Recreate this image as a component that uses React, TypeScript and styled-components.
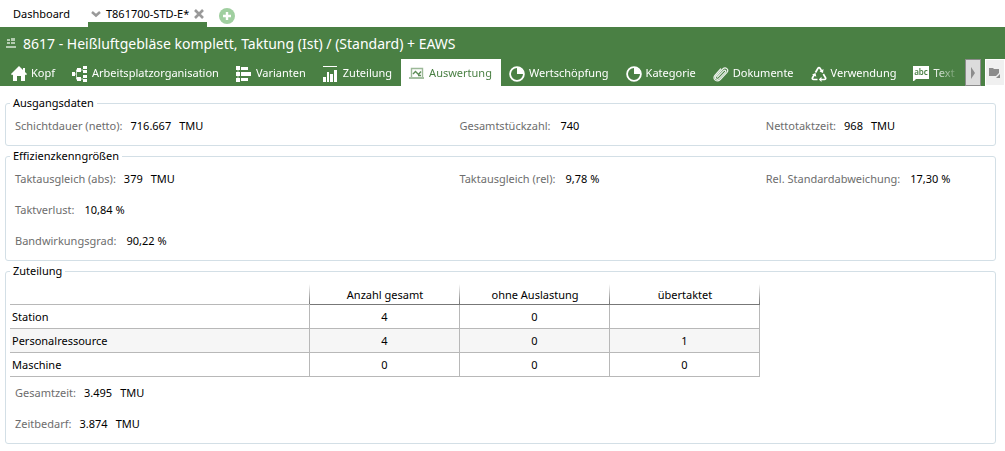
import React from "react";
import styled, { createGlobalStyle } from "styled-components";

const GREEN = "#4a8044";
const LINE = "#b8b8b8";

const GlobalStyle = createGlobalStyle`
  *, *::before, *::after { box-sizing: border-box; }
  body {
    margin: 0;
    background: #fff;
    color: #000;
    font: 11px/16px "Noto Sans", "Open Sans", sans-serif;
  }
  button { font: inherit; }
`;

const DocumentBar = styled.nav`
  display: flex;
  height: 27px;
  padding-left: 5px;
`;

const DocumentTab = styled.div<{ $active?: boolean }>`
  display: flex;
  align-items: center;
  gap: 5px;
  padding: ${(p) => (p.$active ? "5px 3px 0" : "5px 8px 4px")};
  margin-left: ${(p) => (p.$active ? "10px" : "0")};
  border-bottom: ${(p) => (p.$active ? `5px solid ${GREEN}` : "none")};
`;

const PlainButton = styled.button`
  display: flex;
  align-items: center;
  padding: 0;
  border: 0;
  background: none;
  color: inherit;
  white-space: nowrap;
  cursor: pointer;
`;

const AddButton = styled(PlainButton)`
  margin-left: 12px;
  padding-top: 5px;
`;

const Header = styled.header`
  background: ${GREEN};
  color: #fff;
`;

const TitleRow = styled.div`
  display: flex;
  align-items: center;
  gap: 7px;
  height: 32px;
  padding: 2px 6px 0;
`;

const Title = styled.h1`
  margin: 0;
  font-size: 14px;
  line-height: 20px;
  font-weight: 400;
  white-space: nowrap;
`;

const TabRow = styled.div`
  display: flex;
  height: 27px;
`;

const TabStrip = styled.div`
  display: flex;
  flex: 1;
  min-width: 0;
  padding-left: 3px;
  overflow: hidden;
  mask-image: linear-gradient(to left, transparent 4px, #000 32px);
`;

const Tab = styled.button<{ $active?: boolean }>`
  display: flex;
  flex: none;
  align-items: center;
  gap: 4px;
  padding: 1px 9px 0 8px;
  border: 0;
  background: ${(p) => (p.$active ? "#fff" : "transparent")};
  color: ${(p) => (p.$active ? GREEN : "#fff")};
  white-space: nowrap;
  cursor: pointer;
`;

const ScrollButton = styled.button`
  display: flex;
  flex: none;
  align-items: center;
  justify-content: center;
  width: 16px;
  margin-right: 4px;
  padding: 0;
  border: 1px solid #8c8c8c;
  background: #dcdcdc;
`;

const FolderButton = styled(ScrollButton)`
  width: 20px;
  margin: 0;
  border-color: #fff;
  background: #f0f0f0;
`;

const Content = styled.main`
  display: flex;
  flex-direction: column;
  gap: 2px;
  padding: 9px 9px 7px 5px;
`;

const Group = styled.fieldset`
  min-width: 0;
  margin: 0;
  padding: 0 4px 4px;
  border: 1px solid #d3dfe6;
  border-radius: 3px;
`;

const GroupTitle = styled.legend`
  padding: 0 3px;
`;

const Figures = styled.dl`
  display: grid;
  grid-template-columns: 444fr 306fr 225fr;
  grid-auto-rows: 30px;
  row-gap: 1px;
  margin: 0;
  padding-left: 5px;
`;

const FigureItem = styled.div<{ $newLine?: boolean }>`
  display: flex;
  align-items: center;
  grid-column-start: ${(p) => (p.$newLine ? 1 : "auto")};
  white-space: nowrap;
`;

const FigureName = styled.dt`
  color: #6d6d6d;
`;

const FigureValue = styled.dd<{ $percent?: boolean }>`
  margin: 0 0 0 ${(p) => (p.$percent ? 10 : 8)}px;
`;

const Table = styled.table`
  width: 750px;
  max-width: 100%;
  margin: 5px 0 1px;
  border-collapse: separate;
  border-spacing: 0;
  table-layout: fixed;
`;

const CornerCell = styled.td`
  width: 40%;
  padding: 0;
  border-bottom: 1px solid ${LINE};
  background: linear-gradient(#fff, #777) right / 1px 100% no-repeat;
`;

const ColumnHead = styled.th`
  height: 21px;
  padding: 2px 0 0;
  border-bottom: 1px solid #777;
  background: linear-gradient(#fff, #777) right / 1px 100% no-repeat;
  font-weight: 400;
`;

const BodyRow = styled.tr`
  &:nth-child(even) { background: #f6f6f6; }
`;

const RowHead = styled.th`
  height: 24px;
  padding: 0 2px;
  border: solid ${LINE};
  border-width: 0 1px 1px 0;
  font-weight: 400;
  text-align: left;
`;

const Cell = styled.td`
  padding: 0;
  border: solid ${LINE};
  border-width: 0 1px 1px 0;
  text-align: center;
`;

const Svg = styled.svg`
  display: block;
  flex: none;
`;

const TabSvg = styled(Svg)`
  margin-top: 2px;
`;

type IconName =
  | "home" | "org" | "variants" | "bars" | "chart"
  | "pie" | "clip" | "recycle" | "abc";

const drawings: Record<IconName, React.ReactNode> = {
  home: (
    <path fill="currentColor" d="M8 0 0 8l1 1.200L2 8.500V15h4v-5h4v5h4V8.500l1 .700L16 8l-2-2V2h-2v2z" />
  ),
  org: (
    <g fill="currentColor">
      <path d="M0 6h3v4H0zM5 2h4v4H5zM5 11h4v4H5zM11 0h4v3h-4zM11 4h4v3h-4zM11 9h4v3h-4zM11 13h4v3h-4z" />
      <path d="M3 8h1M4.500 4v9M4 4h1M4 13h1M9 4h2M9 13h2" fill="none" stroke="currentColor" opacity=".7" />
    </g>
  ),
  variants: (
    <g fill="currentColor">
      <path d="M0 0h4v4H0zM0 6h4v4H0zM0 12h4v4H0zM5 1h7v3H5zM5 6h10v4H5zM5 12h7v3H5z" />
      <path d="M2 0v16" stroke="currentColor" opacity=".6" />
    </g>
  ),
  bars: (
    <path fill="currentColor" d="M0 0h14v1H0zM0 11h3v5H0zM4 6h2v10H4zM7 8h3v8H7zM11 4h3v12h-3z" />
  ),
  chart: (
    <g fill="none" stroke="currentColor">
      <path d="M2.500 11V2.500h11V11" strokeWidth="1.400" opacity=".55" />
      <path d="M0 12h15" strokeWidth="2" opacity=".5" />
      <path d="m4 8 2.500-2.500 3 3L12 5.500M9 9.500h3" strokeWidth="1.400" opacity=".9" />
    </g>
  ),
  pie: (
    <g>
      <circle cx="8" cy="8" r="6.900" fill="none" stroke="currentColor" strokeWidth="1.800" />
      <path fill="currentColor" d="M8 8V1.500A6.500 6.500 0 0 1 14.500 8z" />
    </g>
  ),
  clip: (
    <path
      fill="none" stroke="currentColor" strokeWidth="1.200" strokeLinecap="round" opacity=".9"
      d="m4.500 11 6.200-6.300c1.200-1.200 2.700.2 1.600 1.500L6 12.600c-2 2-4.800-.3-2.800-2.600l6.600-7c2.800-2.800 6.600.7 4 3.600L7.300 13.500c-3.400 3.400-8.400-.3-5.400-4.200L7.600 3"
    />
  ),
  recycle: (
    <g fill="none" stroke="currentColor" strokeWidth="1.700">
      <path d="M4.500 6.500 7 2.200c.5-.8 1.500-.8 2 0l1.800 3" />
      <path d="m12.300 8 2.200 3.700c.5.900 0 1.800-1 1.800H9.500" />
      <path d="M6.500 13.500h-4c-1 0-1.500-.9-1-1.800l1.800-3" />
      <path fill="currentColor" stroke="none" d="m12.500 3-.5 4-3.500-1.500zM10.500 10.800v5.200L7.800 13.500zM1 8.500 4.500 7l.8 3.700z" />
    </g>
  ),
  abc: (
    <g>
      <path fill="currentColor" d="M0 0h16v13H3l-2 2H0z" />
      <text x="8" y="9" textAnchor="middle" fontSize="8" fontWeight="600" fill={GREEN}>abc</text>
    </g>
  ),
};

const Icon = ({ name }: { name: IconName }) => (
  <TabSvg width="16" height="16" viewBox="0 0 16 16" aria-hidden="true">{drawings[name]}</TabSvg>
);

const tabs: { label: string; icon: IconName }[] = [
  { label: "Kopf", icon: "home" },
  { label: "Arbeitsplatzorganisation", icon: "org" },
  { label: "Varianten", icon: "variants" },
  { label: "Zuteilung", icon: "bars" },
  { label: "Auswertung", icon: "chart" },
  { label: "Wertschöpfung", icon: "pie" },
  { label: "Kategorie", icon: "pie" },
  { label: "Dokumente", icon: "clip" },
  { label: "Verwendung", icon: "recycle" },
  { label: "Text", icon: "abc" },
];

const rows = [
  { name: "Station", values: ["4", "0", ""] },
  { name: "Personalressource", values: ["4", "0", "1"] },
  { name: "Maschine", values: ["0", "0", "0"] },
];

interface FigureProps {
  name: string;
  value: string;
  unit?: string;
  newLine?: boolean;
}

const Figure = ({ name, value, unit, newLine }: FigureProps) => (
  <FigureItem $newLine={newLine}>
    <FigureName>{name}:</FigureName>
    <FigureValue $percent={!unit}>{value}</FigureValue>
    {unit && <FigureValue>{unit}</FigureValue>}
  </FigureItem>
);

export default function App() {
  return (
    <>
      <GlobalStyle />
      <DocumentBar>
        <DocumentTab>
          <PlainButton>Dashboard</PlainButton>
        </DocumentTab>
        <DocumentTab $active>
          <PlainButton aria-label="Liste">
            <Svg width="10" height="8" viewBox="0 0 10 8">
              <path d="m1 2 4 3.500L9 2" fill="none" stroke="#999" strokeWidth="2.500" />
            </Svg>
          </PlainButton>
          <PlainButton>T861700-STD-E*</PlainButton>
          <PlainButton aria-label="Schließen">
            <Svg width="10" height="10" viewBox="0 0 10 10">
              <path d="m1 1 8 8M9 1 1 9" stroke="#999" strokeWidth="2.600" />
            </Svg>
          </PlainButton>
        </DocumentTab>
        <AddButton aria-label="Neu">
          <Svg width="16" height="16" viewBox="0 0 16 16">
            <circle cx="8" cy="8" r="8" fill="#a0cfa0" />
            <path d="M8 4v8M4 8h8" stroke="#fff" strokeWidth="2.400" />
          </Svg>
        </AddButton>
      </DocumentBar>
      <Header>
        <TitleRow>
          <Svg width="10" height="12" viewBox="0 0 10 12" aria-hidden="true">
            <path fill="#b4cdb1" d="M1 1h3v2H1zM5 0h4v3H5zM1 4h3v2H1zM5 4h4v2H5zM0 8h10v2H0z" />
          </Svg>
          <Title>8617 - Heißluftgebläse komplett, Taktung (Ist) / (Standard) + EAWS</Title>
        </TitleRow>
        <TabRow>
          <TabStrip role="tablist">
            {tabs.map((t) => (
              <Tab key={t.label} role="tab" $active={t.icon === "chart"} aria-selected={t.icon === "chart"}>
                <Icon name={t.icon} />
                {t.label}
              </Tab>
            ))}
          </TabStrip>
          <ScrollButton aria-label="Weitere Register">
            <Svg width="6" height="14" viewBox="0 0 6 14">
              <path fill="#8c8c8c" d="M1 1v12l4-6z" />
            </Svg>
          </ScrollButton>
          <FolderButton aria-label="Ordner">
            <Svg width="12" height="12" viewBox="0 0 12 12">
              <path fill="#8c8c8c" d="M0 1h4l1 1h5v4L7 9H0zM11 7v4H7z" />
            </Svg>
          </FolderButton>
        </TabRow>
      </Header>
      <Content>
        <Group>
          <GroupTitle>Ausgangsdaten</GroupTitle>
          <Figures>
            <Figure name="Schichtdauer (netto)" value="716.667" unit="TMU" />
            <Figure name="Gesamtstückzahl" value="740" />
            <Figure name="Nettotaktzeit" value="968" unit="TMU" />
          </Figures>
        </Group>
        <Group>
          <GroupTitle>Effizienzkenngrößen</GroupTitle>
          <Figures>
            <Figure name="Taktausgleich (abs)" value="379" unit="TMU" />
            <Figure name="Taktausgleich (rel)" value="9,78 %" />
            <Figure name="Rel. Standardabweichung" value="17,30 %" />
            <Figure name="Taktverlust" value="10,84 %" newLine />
            <Figure name="Bandwirkungsgrad" value="90,22 %" newLine />
          </Figures>
        </Group>
        <Group>
          <GroupTitle>Zuteilung</GroupTitle>
          <Table>
            <thead>
              <tr>
                <CornerCell />
                <ColumnHead scope="col">Anzahl gesamt</ColumnHead>
                <ColumnHead scope="col">ohne Auslastung</ColumnHead>
                <ColumnHead scope="col">übertaktet</ColumnHead>
              </tr>
            </thead>
            <tbody>
              {rows.map((r) => (
                <BodyRow key={r.name}>
                  <RowHead scope="row">{r.name}</RowHead>
                  {r.values.map((v, i) => (
                    <Cell key={i}>{v}</Cell>
                  ))}
                </BodyRow>
              ))}
            </tbody>
          </Table>
          <Figures>
            <Figure name="Gesamtzeit" value="3.495" unit="TMU" newLine />
            <Figure name="Zeitbedarf" value="3.874" unit="TMU" newLine />
          </Figures>
        </Group>
      </Content>
    </>
  );
}
